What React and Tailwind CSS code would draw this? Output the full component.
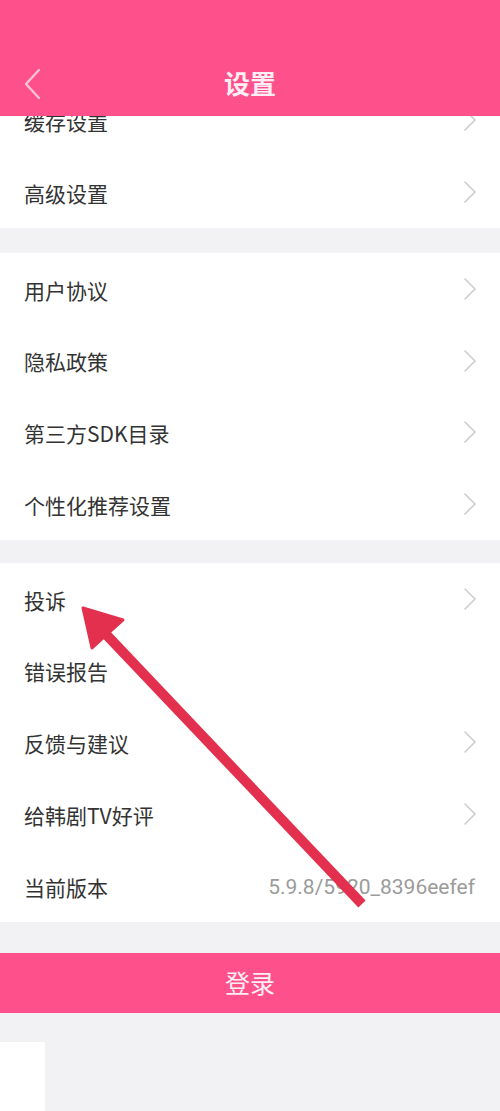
const sections = [
  [
    { label: '缓存设置', arrow: true },
    { label: '高级设置', arrow: true },
  ],
  [
    { label: '用户协议', arrow: true },
    { label: '隐私政策', arrow: true },
    { label: '第三方SDK目录', arrow: true },
    { label: '个性化推荐设置', arrow: true },
  ],
  [
    { label: '投诉', arrow: true },
    { label: '错误报告', arrow: false },
    { label: '反馈与建议', arrow: true },
    { label: '给韩剧TV好评', arrow: true },
    { label: '当前版本', value: '5.9.8/5920_8396eefef' },
  ],
];

const gaps = ['mt-[25px]', 'mt-[23px]'];

function Chevron() {
  return (
    <svg width="16" height="24" viewBox="0 0 16 24" fill="none">
      <path d="M3 2 L13 12 L3 22" stroke="#cdcdd0" strokeWidth="1.6" strokeLinecap="round" strokeLinejoin="round" />
    </svg>
  );
}

function Row({ item }) {
  return (
    <div className="flex h-[71.75px] items-center justify-between pl-[24px] pr-[22px]">
      <span className="pt-[3px] text-[21px] text-[#333333]">{item.label}</span>
      {item.value ? (
        <span className="pr-[3px] pt-[3px] text-[21px] text-[#9b9b9b] [font-family:Roboto,'Noto_Sans',sans-serif]">{item.value}</span>
      ) : item.arrow ? (
        <Chevron />
      ) : null}
    </div>
  );
}

export default function App() {
  return (
    <div className="relative min-h-[1111px] w-full overflow-hidden bg-[#f2f2f4] [font-family:'Noto_Sans_CJK_SC','Noto_Sans',sans-serif]">
      <header className="relative z-10 flex h-[116px] items-end bg-[#fe508a]">
        <div className="relative flex h-[64px] w-full items-center justify-center">
          <svg className="absolute left-[21px] top-[15px]" width="22" height="34" viewBox="0 0 22 34" fill="none">
            <path d="M18 3 L5 17 L18 31" stroke="#f7c3d7" strokeWidth="2.4" strokeLinecap="round" strokeLinejoin="round" />
          </svg>
          <h1 className="-mt-[3px] text-[26px] font-bold text-white/90">设置</h1>
        </div>
      </header>

      <main className="-mt-[31.5px]">
        {sections.map((rows, i) => (
          <section key={i} className={`bg-white ${i > 0 ? gaps[i - 1] : ''}`}>
            {rows.map((item) => (
              <Row key={item.label} item={item} />
            ))}
          </section>
        ))}

        <button
          type="button"
          className="mt-[31px] flex h-[60px] w-full items-center justify-center bg-[#fe508a] text-[25px] text-white/90"
        >
          登录
        </button>

        <div className="mt-[29px] h-[69px] w-[45px] bg-white" />
      </main>

      <svg className="pointer-events-none absolute left-0 top-0" width="500" height="1111" viewBox="0 0 500 1111">
        <line x1="100" y1="628" x2="362" y2="904" stroke="#e2304e" strokeWidth="10" />
        <polygon points="83,608 123,620 92,648" fill="#e2304e" stroke="#e2304e" strokeWidth="3" strokeLinejoin="round" />
      </svg>
    </div>
  );
}
